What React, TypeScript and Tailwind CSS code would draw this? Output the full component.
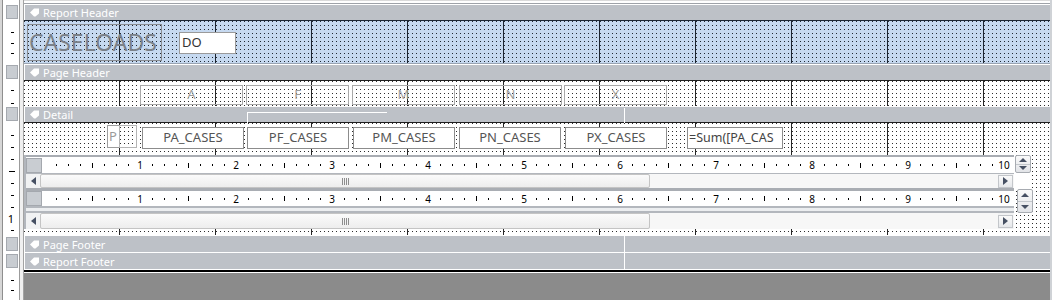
import type { ReactNode } from "react";

const font = "font-['Noto_Sans',sans-serif]";

// dotted design grid + inch lines every 96px
const gridWhite =
  "bg-white bg-[image:linear-gradient(90deg,transparent_95px,#262626_95px,#262626_96px,transparent_96px),conic-gradient(at_1px_1px,transparent_75%,#2e2e2e_0)] bg-[length:96px_100%,4px_4px]";
const gridBlue =
  "bg-[#c6d9f0] bg-[image:linear-gradient(90deg,transparent_95px,#1b2430_95px,#1b2430_96px,transparent_96px),conic-gradient(at_1px_1px,transparent_75%,#1f2833_0)] bg-[length:96px_100%,4px_4px]";

type Mark = { y: number; kind: "dash" | "long" | "one" };

function VRuler({ h, marks }: { h: number; marks: Mark[] }) {
  return (
    <svg width="16" height={h} className="block">
      {marks.map((m, i) =>
        m.kind === "one" ? (
          <text
            key={i}
            x="8"
            y={m.y + 4}
            fontSize="11"
            textAnchor="middle"
            fontFamily="Noto Sans, sans-serif"
            fill="#000"
          >
            1
          </text>
        ) : (
          <rect
            key={i}
            x={m.kind === "long" ? 6 : 8}
            y={m.y}
            width={m.kind === "long" ? 6 : 3}
            height="1"
            fill="#000"
          />
        )
      )}
    </svg>
  );
}

function LeftCell({ children }: { children?: ReactNode }) {
  return (
    <div className="flex w-[24px] shrink-0 self-stretch">
      <div className="w-[2px] bg-[#d6d6d6]" />
      <div className="w-px bg-[#8e8e8e]" />
      <div className="flex w-[16px] items-center bg-white">{children}</div>
      <div className="w-px bg-[#9b9b9b]" />
      <div className="w-[3px] bg-[#f0f0f0]" />
      <div className="w-px bg-[#a3a3a3]" />
    </div>
  );
}

function BarIcon() {
  return (
    <svg width="9" height="9" viewBox="0 0 9 9" className="shrink-0">
      <path d="M0 4.5 4 0.5h5v5L5.5 8.5H4Z" fill="#fff" />
    </svg>
  );
}

function BarRow({
  title,
  h,
  children,
}: {
  title: string;
  h: string;
  children?: ReactNode;
}) {
  return (
    <div className={`flex ${h}`}>
      <LeftCell>
        <div className="ml-[3px] h-[14px] w-[12px] border border-[#a5a9af] bg-[#c8ccd1]" />
      </LeftCell>
      <div className="relative flex flex-1 items-center gap-[4px] border-l border-t border-white bg-[#bdc1c7] pl-[5px] text-[11px] text-white">
        <BarIcon />
        <span className="leading-none">{title}</span>
        {children}
      </div>
    </div>
  );
}

function Tri({ dir }: { dir: "l" | "r" | "u" | "d" }) {
  const d = {
    l: "M5 0V8L0 4Z",
    r: "M0 0V8L5 4Z",
    u: "M0 4 4 0 8 4Z",
    d: "M0 0H8L4 4Z",
  }[dir];
  const w = dir === "l" || dir === "r" ? 5 : 8;
  const hh = dir === "l" || dir === "r" ? 8 : 4;
  return (
    <svg width={w} height={hh} viewBox={`0 0 ${w} ${hh}`} className="block">
      <path d={d} fill="#465063" />
    </svg>
  );
}

function HRulerTicks() {
  const cells: ReactNode[] = [];
  for (let inch = 1; inch <= 10; inch++) {
    for (let k = 1; k <= 8; k++) {
      cells.push(
        <div key={`${inch}-${k}`} className="flex w-[12px] shrink-0 items-center justify-center">
          {k === 8 ? (
            <span className="text-[10px] leading-none text-black">{inch}</span>
          ) : k === 4 ? (
            <div className="h-[5px] w-px bg-black" />
          ) : (
            <div className="h-[2px] w-px bg-black" />
          )}
        </div>
      );
    }
  }
  return <div className="flex pl-[8px]">{cells}</div>;
}

function RulerPanel({ top }: { top: string }) {
  return (
    <div className="flex h-full w-[990px] flex-col border-l-2 border-[#b3b7bd] bg-white">
      <div className={`shrink-0 bg-[#a9adb3] ${top}`} />
      <div className="flex flex-1 items-center">
        <div className="h-[15px] w-[16px] shrink-0 border border-[#a4a8ae] bg-[#c9cdd2]" />
        <HRulerTicks />
      </div>
      <div className="h-px shrink-0 bg-[#b3b7bd]" />
    </div>
  );
}

function HScroll({ h }: { h: string }) {
  return (
    <div className={`flex w-[990px] border-l-2 border-[#b3b7bd] bg-[#f1f2f3] ${h}`}>
      <div className="flex w-[14px] shrink-0 items-center justify-center">
        <Tri dir="l" />
      </div>
      <div className="flex w-[610px] shrink-0 items-center rounded-[2px] border border-[#c4c4c4] bg-gradient-to-b from-[#fbfbfb] to-[#ededed] pl-[301px]">
        <div className="flex gap-px">
          {[0, 1, 2, 3].map((i) => (
            <div key={i} className="h-[7px] w-px bg-[#8d8d8d]" />
          ))}
        </div>
      </div>
      <div className="flex-1 bg-[#f7f7f7]" />
      <div className="my-auto flex h-[13px] w-[15px] shrink-0 items-center justify-center border border-[#c3c6ca] bg-gradient-to-b from-[#fafafa] to-[#e6e8eb]">
        <Tri dir="r" />
      </div>
      <div className="w-px bg-[#f7f7f7]" />
    </div>
  );
}

function Spinner() {
  return (
    <div className="flex h-full w-[16px] flex-col rounded-[2px] border border-[#a7abb1] bg-gradient-to-b from-[#fafafa] to-[#e2e4e8]">
      <div className="flex flex-1 items-center justify-center">
        <Tri dir="u" />
      </div>
      <div className="h-px bg-[#c3c7cc]" />
      <div className="flex flex-1 items-center justify-center">
        <Tri dir="d" />
      </div>
    </div>
  );
}

function RulerJunk() {
  return (
    <div className="mt-[2px] flex w-[1010px] flex-col">
      <div className="flex h-[19px]">
        <RulerPanel top="h-[2px]" />
        <div className="ml-px h-[18px]">
          <Spinner />
        </div>
      </div>
      <div className="flex h-[14px]">
        <HScroll h="h-[14px]" />
        <div className="w-[18px] bg-white" />
      </div>
      <div className="flex h-[25px]">
        <div className="flex w-[990px] flex-col">
          <div className="h-[18px]">
            <RulerPanel top="h-[3px]" />
          </div>
          <div className="h-[7px] border-y-2 border-l-2 border-[#b3b7bd] bg-[#eceef0]" />
        </div>
        <div className="ml-[3px] mt-px h-[24px]">
          <Spinner />
        </div>
      </div>
      <div className="flex h-[16px]">
        <HScroll h="h-[16px]" />
        <div className="ml-[18px] mt-[6px] h-px w-[2px] bg-black" />
      </div>
    </div>
  );
}

const labels = [
  { t: "A", l: "left-[116px]" },
  { t: "F", l: "left-[222px]" },
  { t: "M", l: "left-[328px]" },
  { t: "N", l: "left-[435px]" },
  { t: "X", l: "left-[540px]" },
];

const fields = [
  { t: "PA_CASES", l: "left-[118px]" },
  { t: "PF_CASES", l: "left-[223px]" },
  { t: "PM_CASES", l: "left-[329px]" },
  { t: "PN_CASES", l: "left-[435px]" },
  { t: "PX_CASES", l: "left-[541px]" },
];

export default function App() {
  return (
    <div
      className={`h-[300px] w-[1052px] overflow-hidden border-r-2 border-[#cfd2d6] bg-white ${font}`}
    >
      {/* top edge */}
      <div className="flex h-[4px]">
        <LeftCell />
        <div className="flex-1 border-b border-t border-b-[#9ea2a8] border-t-[#dadada] bg-white" />
      </div>

      {/* Report Header */}
      <BarRow title="Report Header" h="h-[16px]" />
      <div className="flex h-[44px]">
        <LeftCell>
          <VRuler
            h={44}
            marks={[
              { y: 12, kind: "dash" },
              { y: 23, kind: "dash" },
              { y: 33, kind: "dash" },
            ]}
          />
        </LeftCell>
        <div className={`relative flex-1 border-b border-t border-b-[#9aa4b2] border-t-[#1c2633] ${gridBlue}`}>
          <div className="absolute left-[3px] top-[3px] flex h-[37px] w-[135px] items-center border border-[#8a8d92] pl-[1px] text-[23px] leading-none text-[#7b8189]">
            CASELOADS
          </div>
          <div className="absolute left-[155px] top-[11px] flex h-[22px] w-[57px] items-center border border-[#9a9a9a] bg-white pl-[2px] text-[13px] text-[#333]">
            DO
          </div>
        </div>
      </div>

      {/* Page Header */}
      <BarRow title="Page Header" h="h-[16px]" />
      <div className="flex h-[26px]">
        <LeftCell>
          <VRuler
            h={26}
            marks={[
              { y: 10, kind: "dash" },
              { y: 23, kind: "dash" },
            ]}
          />
        </LeftCell>
        <div className={`relative flex-1 border-t border-[#1f1f1f] ${gridWhite}`}>
          {labels.map((lb) => (
            <div
              key={lb.t}
              className={`absolute top-[4px] flex h-[20px] w-[103px] items-center justify-center border border-[#a9a9a9] text-[13px] text-[#9c9c9c] ${lb.l}`}
            >
              {lb.t}
            </div>
          ))}
        </div>
      </div>

      {/* Detail */}
      <BarRow title="Detail" h="h-[16px]">
        <div className="absolute left-[222px] top-[5px] h-px w-[140px] bg-white" />
        <div className="absolute left-[222px] top-[5px] h-[11px] w-px bg-white" />
        <div className="absolute left-[599px] top-[1px] h-[15px] w-px bg-white" />
      </BarRow>
      <div className="flex h-[113px]">
        <LeftCell>
          <VRuler
            h={113}
            marks={[
              { y: 13, kind: "dash" },
              { y: 25, kind: "dash" },
              { y: 37, kind: "dash" },
              { y: 49, kind: "long" },
              { y: 61, kind: "dash" },
              { y: 73, kind: "dash" },
              { y: 85, kind: "dash" },
              { y: 97, kind: "one" },
              { y: 108, kind: "dash" },
            ]}
          />
        </LeftCell>
        <div className={`flex flex-1 flex-col border-t border-[#1f1f1f] ${gridWhite}`}>
          <div className="relative h-[30px] shrink-0">
            <div className="absolute left-[83px] top-[2px] flex h-[23px] w-[13px] items-center border border-[#9d9d9d] bg-white pl-px text-[13px] leading-none text-[#9a9a9a]">
              P
            </div>
            <div className="absolute left-[95px] top-[2px] h-[23px] w-[18px] border border-[#b5b5b5]" />
            {fields.map((f) => (
              <div
                key={f.t}
                className={`absolute top-[4px] flex h-[22px] w-[102px] items-center justify-center border border-[#8c8c8c] bg-white text-[13px] text-[#555] ${f.l}`}
              >
                {f.t}
              </div>
            ))}
            <div className="absolute left-[663px] top-[4px] flex h-[22px] w-[96px] items-center whitespace-nowrap border border-[#8c8c8c] bg-white pl-[1px] text-[12.5px] text-[#444]">
              =Sum([PA_CAS
            </div>
          </div>
          <RulerJunk />
        </div>
      </div>

      {/* Footers */}
      <BarRow title="Page Footer" h="h-[17px]">
        <div className="absolute left-[599px] top-0 h-[17px] w-px bg-white" />
      </BarRow>
      <BarRow title="Report Footer" h="h-[17px]">
        <div className="absolute left-[599px] top-0 h-[17px] w-px bg-white" />
      </BarRow>
      <div className="flex h-[4px]">
        <LeftCell />
        <div className="flex-1 bg-white pt-px">
          <div className="h-[2px] bg-black" />
        </div>
      </div>
      <div className="flex h-[27px]">
        <LeftCell>
          <VRuler
            h={27}
            marks={[
              { y: 7, kind: "dash" },
              { y: 17, kind: "dash" },
            ]}
          />
        </LeftCell>
        <div className="flex-1 bg-[#8b8b8b]" />
      </div>
    </div>
  );
}
